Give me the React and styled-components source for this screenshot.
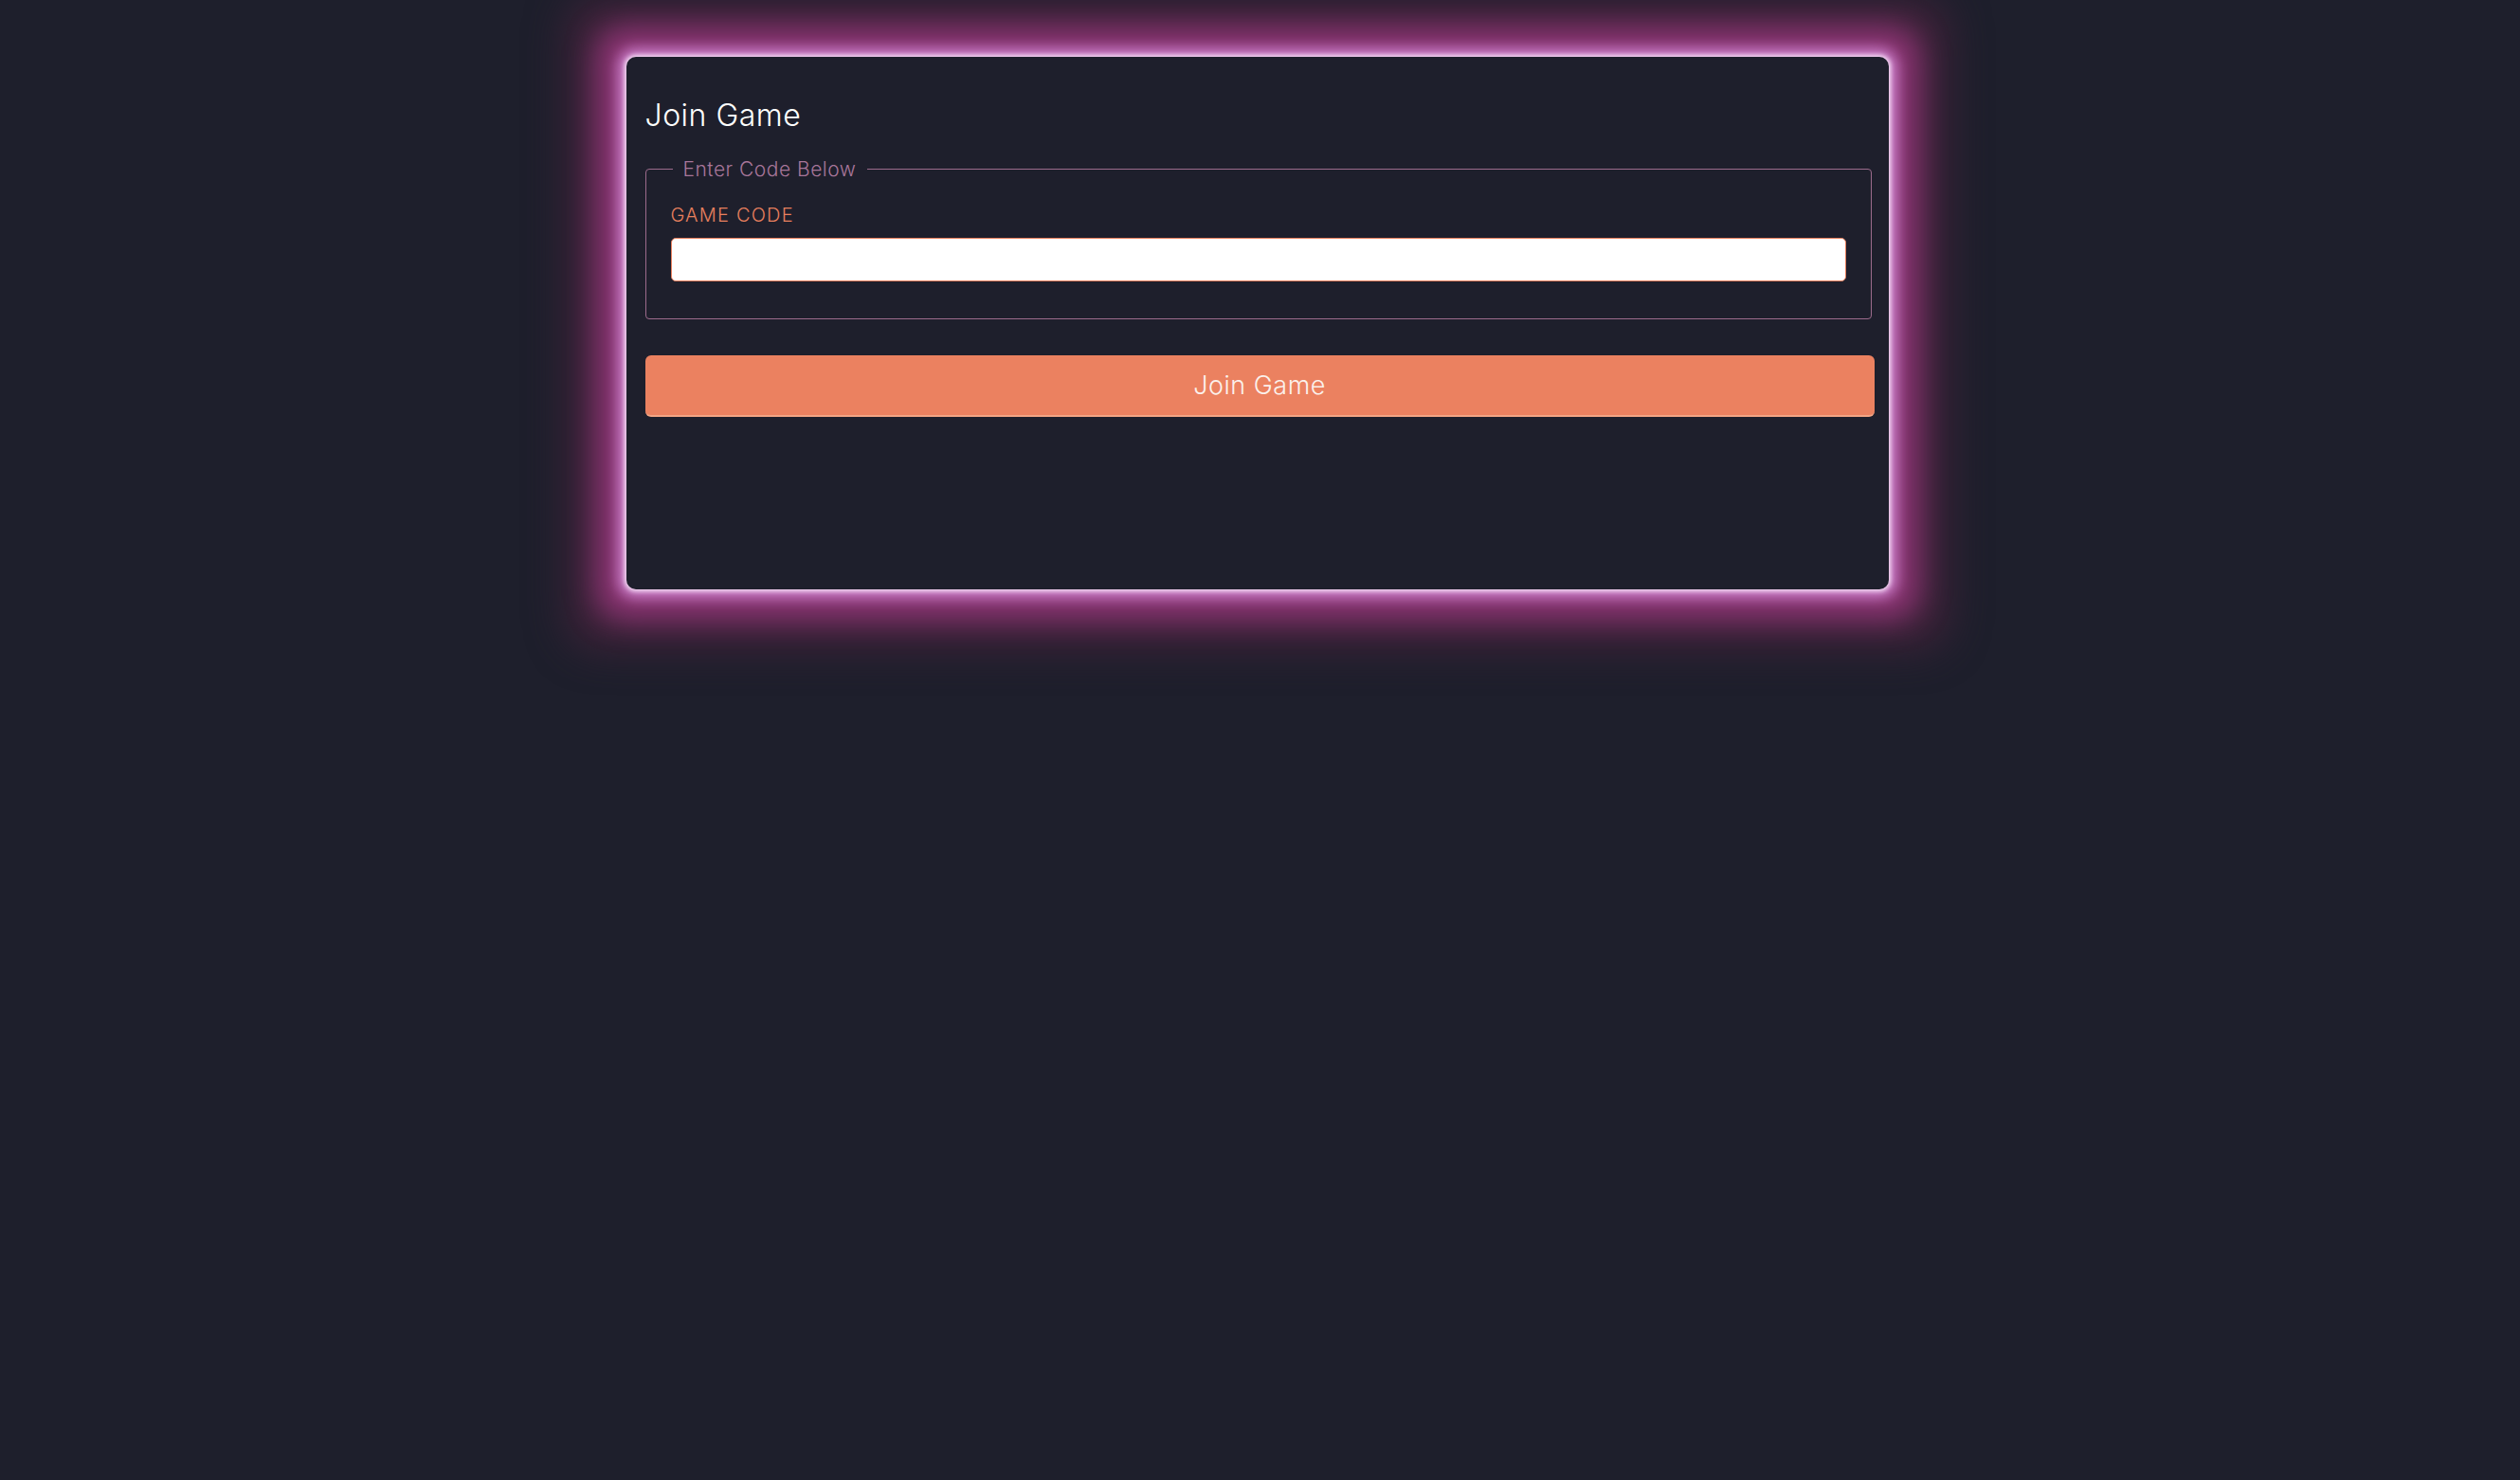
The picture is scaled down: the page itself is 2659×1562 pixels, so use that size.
import styled, { createGlobalStyle } from 'styled-components';

const GlobalStyle = createGlobalStyle`
  html, body {
    margin: 0;
    padding: 0;
    background: #1e1f2c;
    font-family: Inter, "Open Sans", sans-serif;
  }
`;

const Page = styled.div`
  min-height: 1562px;
  padding: 60px 6px 0 0;
  box-sizing: border-box;
  overflow: hidden;
`;

const Card = styled.div`
  width: 1332px;
  min-height: 562px;
  margin: 0 auto;
  padding: 43px 18px 20px 20px;
  box-sizing: border-box;
  background: #1e1f2c;
  border-radius: 10px;
  box-shadow:
    0 0 5px 2px #f6e2f6,
    0 0 14px 9px #cc80cc,
    0 0 30px 33px #8a3472,
    0 0 40px 64px #3c2238;
`;

const Title = styled.h2`
  margin: 0 0 25px;
  font-size: 32px;
  font-weight: 300;
  line-height: 1.2;
  color: #ffffff;
  letter-spacing: 0.5px;
`;

const Fieldset = styled.fieldset`
  margin: 0;
  padding: 24px 26px 39px;
  border: 1px solid #9c6b8c;
  border-radius: 4px;
  min-width: 0;
`;

const Legend = styled.legend`
  margin-left: 2px;
  padding: 0 12px 0 11px;
  font-size: 21px;
  font-weight: 300;
  color: #a8769a;
  letter-spacing: 0.5px;
`;

const Label = styled.label`
  display: block;
  margin-bottom: 12px;
  font-size: 20px;
  font-weight: 300;
  color: #e8805e;
  letter-spacing: 1.2px;
`;

const Input = styled.input`
  display: block;
  width: 100%;
  height: 46px;
  box-sizing: border-box;
  border: 1px solid #e8805e;
  border-radius: 5px;
  background: #ffffff;
  outline: none;
  font-size: 20px;
  padding: 0 12px;
`;

const JoinButton = styled.button`
  display: block;
  width: calc(100% + 3px);
  height: 65px;
  margin-top: 38px;
  border: none;
  border-bottom: 2px solid #f3a585;
  border-radius: 6px;
  background: #eb8160;
  color: #fbf1ec;
  font-family: Inter, "Open Sans", sans-serif;
  font-size: 27px;
  font-weight: 300;
  letter-spacing: 0.5px;
  cursor: pointer;
`;

export default function App() {
  return (
    <>
      <GlobalStyle />
      <Page>
        <Card>
          <Title>Join Game</Title>
          <Fieldset>
            <Legend>Enter Code Below</Legend>
            <Label htmlFor="code">GAME CODE</Label>
            <Input id="code" type="text" />
          </Fieldset>
          <JoinButton>Join Game</JoinButton>
        </Card>
      </Page>
    </>
  );
}
